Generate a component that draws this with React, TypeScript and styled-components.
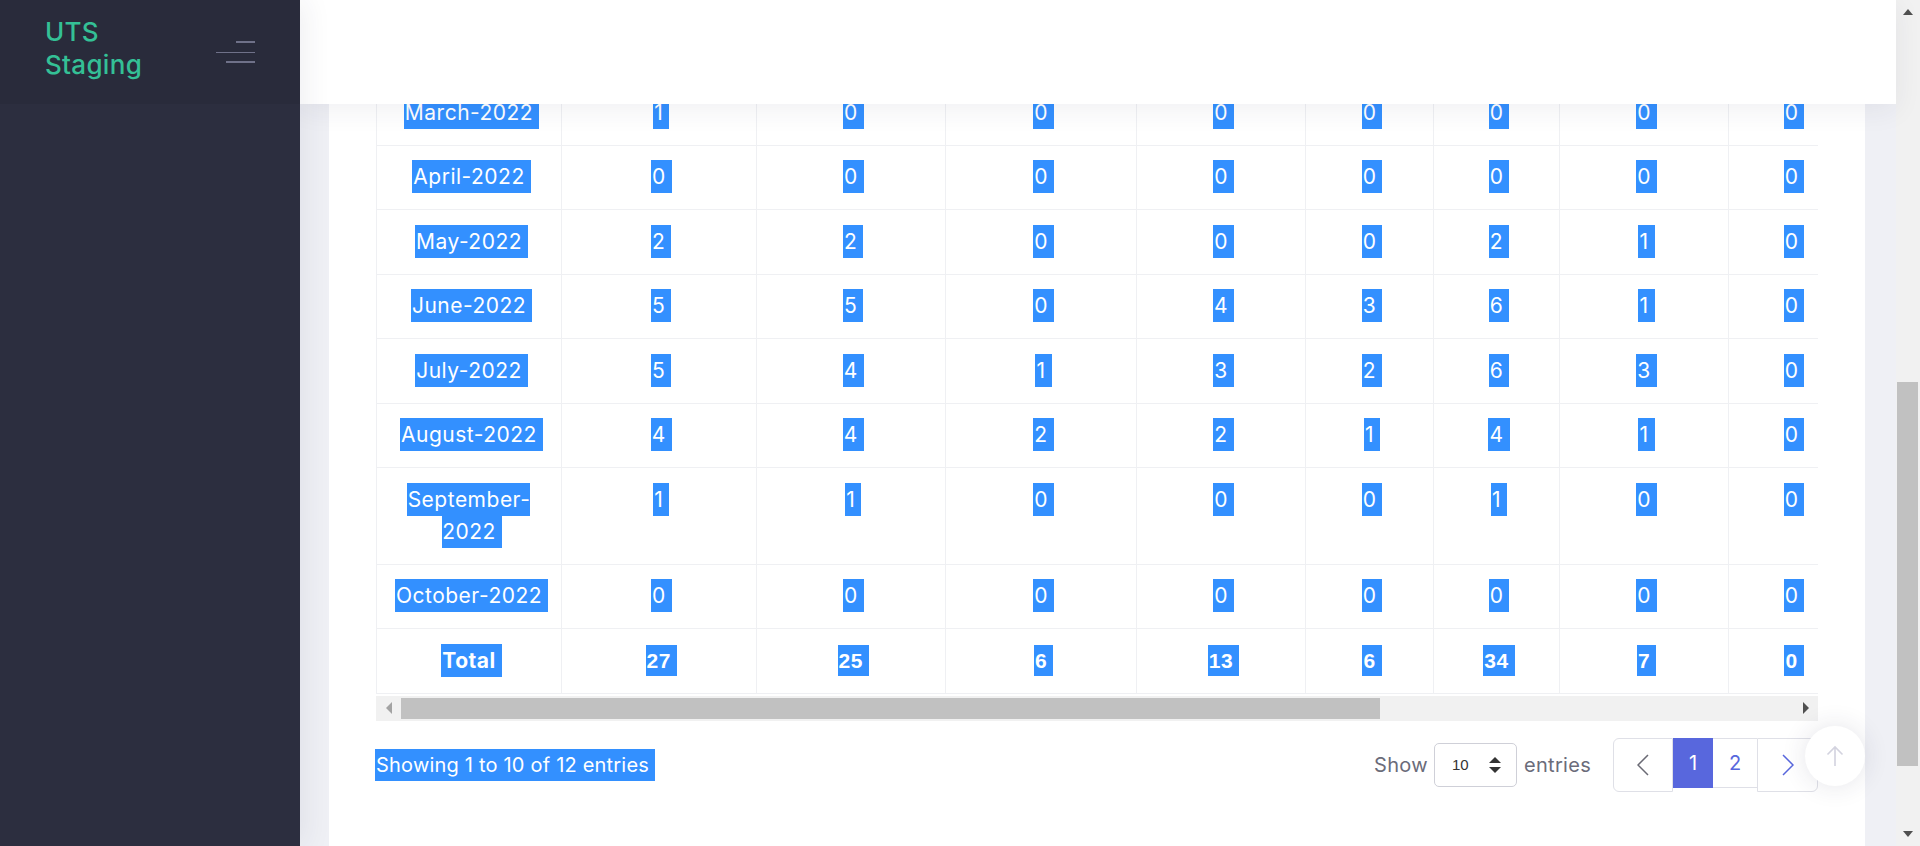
import React from 'react'
import styled, { createGlobalStyle } from 'styled-components'

const GlobalStyle = createGlobalStyle`
    html, body {
        margin: 0;
        padding: 0;
        height: 100%;
        overflow: hidden;
    }
    body {
        font-family: Inter, "Noto Sans", sans-serif;
        background: #eff0f5;
    }
    #root {
        height: 100%;
    }
    * {
        box-sizing: border-box;
    }
`;

const Layout = styled.div`
    display: flex;
    height: 100vh;
    width: 100vw;
`;

const Sidebar = styled.aside`
    width: 300px;
    flex: none;
    background: #2c2e3f;
    box-shadow: 6px 0 26px rgba(40, 42, 70, 0.07);
    position: relative;
    z-index: 3;
`;

const SidebarHead = styled.div`
    height: 104px;
    background: #292b3b;
    display: flex;
    align-items: center;
    justify-content: space-between;
    padding: 0 45px 0 45px;
`;

const Brand = styled.div`
    width: 120px;
    color: #34c096;
    font-size: 26px;
    letter-spacing: 0.3px;
    line-height: 33px;
    font-weight: 500;
    margin-top: -8px;
`;

const Hamburger = styled.div`
    width: 39px;
    display: flex;
    flex-direction: column;
    align-items: flex-end;
    gap: 8.5px;
`;

const HamburgerBar = styled.span<{ $w: number; $h: number }>`
    display: block;
    width: ${p => p.$w}px;
    height: ${p => p.$h}px;
    background: #6f7189;
`;

const Main = styled.main`
    flex: 1;
    min-width: 0;
    display: flex;
    flex-direction: column;
    background: #eff0f5;
`;

const TopBar = styled.header`
    height: 104px;
    flex: none;
    background: #fff;
    box-shadow: 0 6px 26px rgba(40, 42, 70, 0.07);
    position: relative;
    z-index: 2;
`;

const Content = styled.section`
    flex: 1;
    overflow: hidden;
    padding: 0 31px 0 29px;
`;

const Card = styled.div`
    background: #fff;
    margin-top: -24px;
    padding: 0 47px;
    min-height: calc(100% + 40px);
`;

const TableWrap = styled.div`
    overflow: hidden;
`;

const Table = styled.table`
    border-collapse: collapse;
    table-layout: fixed;
    width: 2063px;
`;

const Cell = styled.td<{ $bold?: boolean; $label?: boolean }>`
    border: 1px solid #eff0f3;
    padding: 15.75px ${p => (p.$label ? 12 : 10)}px;
    line-height: 32px;
    font-size: 21px;
    letter-spacing: 0.5px;
    text-align: center;
    vertical-align: top;
    color: #fff;
    font-weight: ${p => (p.$bold ? 700 : 400)};
    font-family: ${p => (p.$bold && !p.$label ? '"Liberation Sans", Arial, sans-serif' : 'Inter, "Noto Sans", sans-serif')};
`;

const Sel = styled.span`
    background: #3390ff;
    color: #fff;
    padding: 4px 6px 4px 1px;
    margin: 0 -6px 0 -1px;
`;

const HScroll = styled.div`
    margin-top: 2px;
    height: 25px;
    background: #f1f1f1;
    display: flex;
    align-items: center;
`;

const ArrowBox = styled.div<{ $w?: number; $h?: number }>`
    flex: none;
    width: ${p => p.$w ?? 25}px;
    height: ${p => p.$h ?? 25}px;
    display: flex;
    align-items: center;
    justify-content: center;
`;

const Triangle = styled.span<{ $dir: 'left' | 'right' | 'up' | 'down'; $color: string }>`
    width: 0;
    height: 0;
    border: 6px solid transparent;
    ${p => p.$dir === 'left' && `border-right-color: ${p.$color}; border-left-width: 0;`}
    ${p => p.$dir === 'right' && `border-left-color: ${p.$color}; border-right-width: 0;`}
    ${p => p.$dir === 'up' && `border-bottom-color: ${p.$color}; border-top-width: 0; border-width: 0 5.5px 6px;`}
    ${p => p.$dir === 'down' && `border-top-color: ${p.$color}; border-bottom-width: 0; border-width: 6px 5.5px 0;`}
`;

const HThumb = styled.div`
    flex: none;
    width: 979px;
    height: 21px;
    background: #c1c1c1;
`;

const Spacer = styled.div`
    flex: 1;
`;

const Footer = styled.div`
    display: flex;
    justify-content: space-between;
    align-items: center;
    padding-top: 17px;
`;

const Info = styled.div`
    font-size: 20px;
    letter-spacing: 0.2px;
    line-height: 32px;
`;

const Controls = styled.div`
    display: flex;
    align-items: center;
`;

const LengthLabel = styled.span`
    font-size: 20px;
    letter-spacing: 0.3px;
    color: #6b6c7a;
`;

const LengthSelect = styled.div`
    width: 83px;
    height: 44px;
    margin: 0 7px 0 6px;
    border: 1px solid #cfd0d8;
    border-radius: 5px;
    display: flex;
    align-items: center;
    justify-content: space-between;
    padding: 0 15px 0 17px;
    font-family: "Liberation Sans", Arial, sans-serif;
    font-size: 15px;
    color: #333;
`;

const Pagination = styled.nav`
    display: flex;
    align-items: flex-start;
    margin-left: 22px;
`;

const PageEdge = styled.div<{ $side: 'prev' | 'next' }>`
    width: ${p => (p.$side === 'prev' ? 60 : 61)}px;
    height: 54px;
    border: 1px solid #dfe0e7;
    border-radius: ${p => (p.$side === 'prev' ? '6px 0 0 6px' : '0 6px 6px 0')};
    display: flex;
    align-items: center;
    justify-content: center;
    color: ${p => (p.$side === 'prev' ? '#6a6a74' : '#5867dd')};
`;

const PageNum = styled.div<{ $active?: boolean; $w: number }>`
    width: ${p => p.$w}px;
    height: 50px;
    border-top: 1px solid ${p => (p.$active ? '#5867dd' : '#dfe0e7')};
    border-bottom: 1px solid ${p => (p.$active ? '#5867dd' : '#dfe0e7')};
    background: ${p => (p.$active ? '#5867dd' : '#fff')};
    color: ${p => (p.$active ? '#fff' : '#5867dd')};
    display: flex;
    align-items: center;
    justify-content: center;
    font-size: 20px;
`;

const VScroll = styled.div`
    width: 24px;
    flex: none;
    background: #f1f1f1;
    display: flex;
    flex-direction: column;
`;

const VGap = styled.div`
    height: 358px;
    flex: none;
`;

const VThumb = styled.div`
    height: 384px;
    flex: none;
    margin: 0 2px 0 1px;
    background: #c1c1c1;
`;

const ScrollTop = styled.button`
    position: fixed;
    right: 55px;
    bottom: 60px;
    width: 60px;
    height: 60px;
    border: none;
    border-radius: 50%;
    background: #fff;
    box-shadow: 0 0 26px rgba(40, 42, 70, 0.12);
    display: flex;
    align-items: center;
    justify-content: center;
    padding: 0;
`;

const widths = [185, 194.5, 189.5, 191, 169, 128, 126, 169, 126, 190, 200, 195];

type Row = { month: string; values: number[] };

const rows: Row[] = [
    { month: 'March-2022', values: [1, 0, 0, 0, 0, 0, 0, 0, 0, 0, 1] },
    { month: 'April-2022', values: [0, 0, 0, 0, 0, 0, 0, 0, 0, 0, 0] },
    { month: 'May-2022', values: [2, 2, 0, 0, 0, 2, 1, 0, 0, 1, 2] },
    { month: 'June-2022', values: [5, 5, 0, 4, 3, 6, 1, 0, 1, 2, 5] },
    { month: 'July-2022', values: [5, 4, 1, 3, 2, 6, 3, 0, 0, 2, 4] },
    { month: 'August-2022', values: [4, 4, 2, 2, 1, 4, 1, 0, 0, 1, 4] },
    { month: 'September-2022', values: [1, 1, 0, 0, 0, 1, 0, 0, 0, 0, 1] },
    { month: 'October-2022', values: [0, 0, 0, 0, 0, 0, 0, 0, 0, 0, 0] },
];

const totals = [27, 25, 6, 13, 6, 34, 7, 0, 1, 8, 22];

const Chevron = ({ dir }: { dir: 'left' | 'right' }) => (
    <svg width="12" height="22" viewBox="0 0 12 22" fill="none">
        <polyline
            points={dir === 'left' ? '11,1 1,11 11,21' : '1,1 11,11 1,21'}
            stroke="currentColor"
            strokeWidth="1.5"
            strokeLinejoin="miter"
        />
    </svg>
);

const SortIcon = () => (
    <svg width="12" height="16" viewBox="0 0 12 16">
        <path d="M6 0 L12 6 H0 Z" fill="#333" />
        <path d="M0 10 H12 L6 16 Z" fill="#333" />
    </svg>
);

const ArrowUp = () => (
    <svg width="18" height="22" viewBox="0 0 18 22" fill="none">
        <path d="M9 21V2 M1.5 9.5 L9 2 L16.5 9.5" stroke="#d3d3df" strokeWidth="1.6" />
    </svg>
);

const App = () => {
    return (
        <>
            <GlobalStyle />
            <Layout>
                <Sidebar>
                    <SidebarHead>
                        <Brand>UTS Staging</Brand>
                        <Hamburger>
                            <HamburgerBar $w={19} $h={2} />
                            <HamburgerBar $w={39} $h={1} />
                            <HamburgerBar $w={29} $h={2} />
                        </Hamburger>
                    </SidebarHead>
                </Sidebar>
                <Main>
                    <TopBar />
                    <Content>
                        <Card>
                            <TableWrap>
                                <Table>
                                    <colgroup>
                                        {widths.map((w, i) => (
                                            <col key={i} style={{ width: w }} />
                                        ))}
                                    </colgroup>
                                    <tbody>
                                        {rows.map(row => (
                                            <tr key={row.month}>
                                                <Cell $label>
                                                    <Sel>{row.month}</Sel>
                                                </Cell>
                                                {row.values.map((v, i) => (
                                                    <Cell key={i}>
                                                        <Sel>{v}</Sel>
                                                    </Cell>
                                                ))}
                                            </tr>
                                        ))}
                                        <tr>
                                            <Cell $label $bold>
                                                <Sel>Total</Sel>
                                            </Cell>
                                            {totals.map((v, i) => (
                                                <Cell key={i} $bold>
                                                    <Sel>{v}</Sel>
                                                </Cell>
                                            ))}
                                        </tr>
                                    </tbody>
                                </Table>
                            </TableWrap>
                            <HScroll>
                                <ArrowBox>
                                    <Triangle $dir="left" $color="#a3a3a3" />
                                </ArrowBox>
                                <HThumb />
                                <Spacer />
                                <ArrowBox>
                                    <Triangle $dir="right" $color="#505050" />
                                </ArrowBox>
                            </HScroll>
                            <Footer>
                                <Info>
                                    <Sel>Showing 1 to 10 of 12 entries</Sel>
                                </Info>
                                <Controls>
                                    <LengthLabel>Show</LengthLabel>
                                    <LengthSelect>
                                        <span>10</span>
                                        <SortIcon />
                                    </LengthSelect>
                                    <LengthLabel>entries</LengthLabel>
                                    <Pagination>
                                        <PageEdge $side="prev">
                                            <Chevron dir="left" />
                                        </PageEdge>
                                        <PageNum $active $w={40}>1</PageNum>
                                        <PageNum $w={44}>2</PageNum>
                                        <PageEdge $side="next">
                                            <Chevron dir="right" />
                                        </PageEdge>
                                    </Pagination>
                                </Controls>
                            </Footer>
                        </Card>
                    </Content>
                </Main>
                <VScroll>
                    <ArrowBox $w={24} $h={24}>
                        <Triangle $dir="up" $color="#505050" />
                    </ArrowBox>
                    <VGap />
                    <VThumb />
                    <Spacer />
                    <ArrowBox $w={24} $h={24}>
                        <Triangle $dir="down" $color="#505050" />
                    </ArrowBox>
                </VScroll>
                <ScrollTop aria-label="Scroll to top">
                    <ArrowUp />
                </ScrollTop>
            </Layout>
        </>
    );
};

export default App;
